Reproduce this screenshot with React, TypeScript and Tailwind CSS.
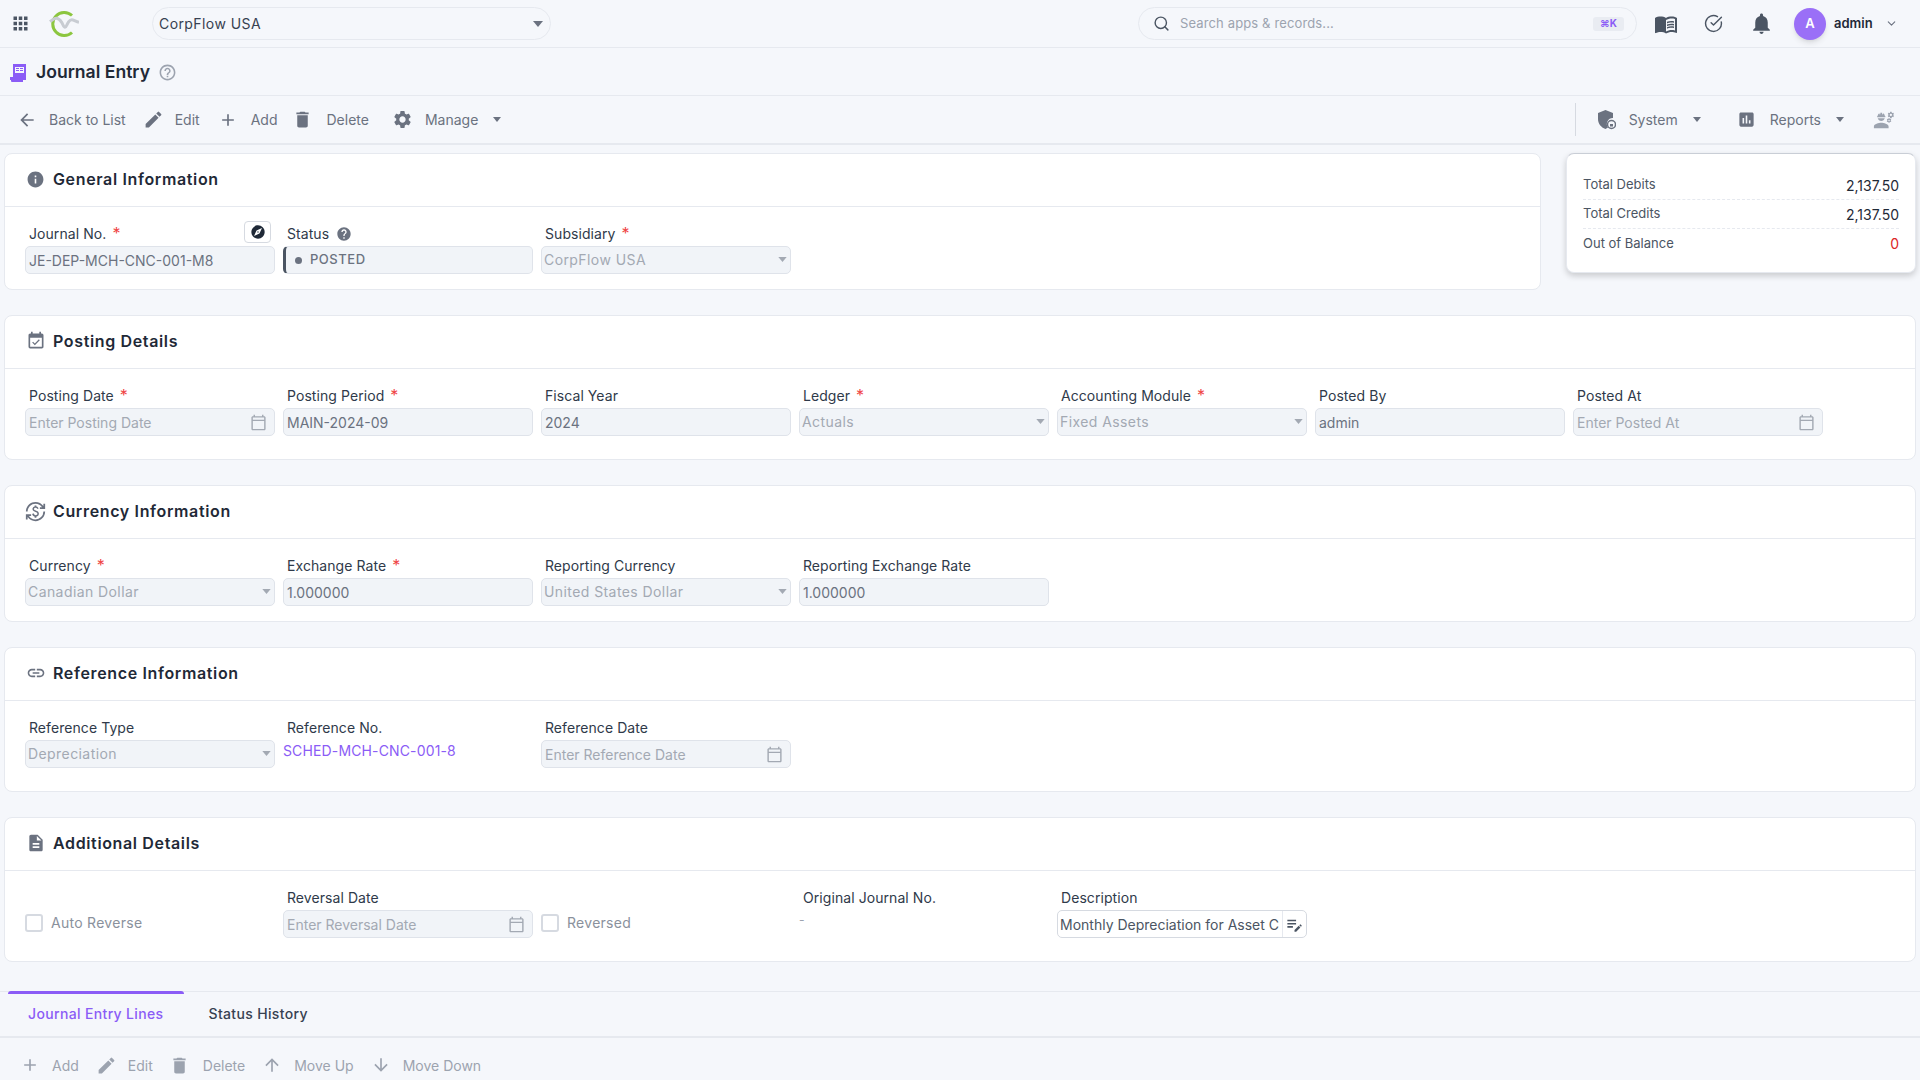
import { ReactNode } from "react";
import { ChevronDown, CircleCheckBig, Search } from "lucide-react";
import {
  MdAdd,
  MdApps,
  MdArrowBack,
  MdArrowDownward,
  MdArrowUpward,
  MdAssessment,
  MdCurrencyExchange,
  MdDelete,
  MdDescription,
  MdEdit,
  MdEngineering,
  MdEventAvailable,
  MdExplore,
  MdHelp,
  MdHelpOutline,
  MdInfo,
  MdLink,
  MdMenuBook,
  MdNotifications,
  MdOutlineCalendarToday,
  MdOutlineEditNote,
  MdSettings,
} from "react-icons/md";

function Caret({ className }: { className: string }) {
  return (
    <svg viewBox="0 0 10 6" className={className} fill="currentColor">
      <path d="M0 0h10L5 6z" />
    </svg>
  );
}

function Logo() {
  return (
    <svg viewBox="0 0 30 26" className="w-[30px] h-[26px]" fill="none">
      <path d="M23 4.500A11.500 11.500 0 1 0 23 21.500" stroke="#8cc63f" strokeWidth="3" />
      <path d="M1 10.700C3 9 5.500 7 7.700 7.300S11.500 9.500 12.700 11.300S14.500 16.300 16 16.300S18 13 19.300 11.300S21 8.700 22.700 8.700S27 10.500 30 11.300" stroke="#c8ccd2" strokeWidth="3" />
    </svg>
  );
}

function JournalIcon() {
  return (
    <svg viewBox="0 0 17 18" className="w-[17px] h-[18px]" fill="#8b5cf6">
      <path d="M3 0h13v16H0v-3h3zM5 3v6h9V3z" />
      <path d="M6 4h3v1H6zm4 0h3v1h-3zM6 6h3v1H6zm4 0h3v1h-3z" />
      <path d="M1 15h12v3H2a1 1 0 0 1-1-1z" />
    </svg>
  );
}

function ShieldIcon() {
  return (
    <svg viewBox="0 0 18 20" className="w-[18px] h-[20px]" fill="#6b7280">
      <path d="M7.500 0 15 3v5a6 6 0 0 0-5 9.500L7.500 19C3 17.500 0 13.500 0 9V3z" />
      <circle cx="13.500" cy="14.500" r="4" fill="none" stroke="#6b7280" strokeWidth="1.500" />
      <rect x="12" y="14" width="3" height="2.500" />
    </svg>
  );
}

function ToolButton({ icon, label, className, caret }: { icon: ReactNode; label: string; className: string; caret?: boolean }) {
  return (
    <button className={`flex items-center ${className}`}>
      {icon}
      <span>{label}</span>
      {caret && <Caret className="w-[8px] h-[5px] ml-[15px]" />}
    </button>
  );
}

function Card({ icon, title, className, children }: { icon: ReactNode; title: string; className: string; children: ReactNode }) {
  return (
    <section className={`bg-white border border-[#e6e9ef] rounded-lg ${className}`}>
      <div className="h-[53px] pb-[2px] flex items-center border-b border-[#e6e9ef] pl-[15px]">
        <span className="w-[31px] text-[#6b7280] flex justify-center mr-[2px]">{icon}</span>
        <h2 className="text-[16px] font-semibold tracking-[0.04em] text-[#1f2937]">{title}</h2>
      </div>
      {children}
    </section>
  );
}

function Field({ label, required, help, action, children }: { label: string; required?: boolean; help?: boolean; action?: ReactNode; children: ReactNode }) {
  return (
    <div className="w-[250px]">
      <div className="h-[24px] pl-[4px] flex items-center text-[14px] leading-none tracking-[0.005em] text-[#2f3a4a] relative">
        <span>{label}</span>
        {required && <span className="ml-[6px] text-[16px] text-[#ef4444] -mt-[2px]">*</span>}
        {help && <MdHelp className="ml-[7px] w-[16px] h-[16px] text-[#6b7280]" />}
        {action}
      </div>
      {children}
    </div>
  );
}

function TextBox({ value, placeholder, calendar }: { value?: string; placeholder?: string; calendar?: boolean }) {
  return (
    <div className="h-[28px] bg-[#f1f4f8] border border-[#dfe3ea] rounded-[5px] pl-[3px] pr-[7px] flex items-center justify-between text-[14px]">
      {value ? <span className="text-[#6b7280]">{value}</span> : <span className="text-[#a3a9b3]">{placeholder}</span>}
      {calendar && <MdOutlineCalendarToday className="w-[17px] h-[17px] text-[#a3a9b3]" />}
    </div>
  );
}

function SelectBox({ value }: { value: string }) {
  return (
    <div className="h-[28px] bg-[#f1f4f8] border border-[#dfe3ea] rounded-[5px] pl-[2px] pr-[3px] pb-[1px] flex items-center justify-between text-[14px] tracking-[0.03em] text-[#a3a9b3]">
      <span>{value}</span>
      <Caret className="w-[9px] h-[5px] text-[#a3a9b3]" />
    </div>
  );
}

function Check({ label, className }: { label: string; className: string }) {
  return (
    <label className={`w-[250px] flex items-center gap-2 text-[14px] tracking-[0.02em] text-[#8a919c] ${className}`}>
      <span className="w-[18px] h-[18px] rounded-[3px] border-2 border-[#d6dae1] bg-white" />
      {label}
    </label>
  );
}

function SummaryRow({ label, value, red, line }: { label: string; value: string; red?: boolean; line?: boolean }) {
  return (
    <div className={`h-[29px] flex items-center justify-between text-[13px] ${line ? "border-b border-dashed border-[#e6e9ef]" : ""}`}>
      <span className="text-[#4b5563]">{label}</span>
      <span className={`text-[14px] ${red ? "text-[#dc2626]" : "text-[#1f2937]"}`}>{value}</span>
    </div>
  );
}

export default function App() {
  return (
    <div className="h-screen overflow-hidden bg-[#f5f7fb] font-['Inter',sans-serif]">
      <header className="h-[48px] border-b border-[#e6e9ef] flex items-center">
        <MdApps className="ml-[10px] w-[21px] h-[21px] text-[#4b5563]" />
        <span className="ml-[18px] flex">
          <Logo />
        </span>
        <div className="ml-[73px] w-[399px] h-[33px] rounded-full border border-[#e6e9ef] flex items-center justify-between pl-[6px] pr-[7px] text-[14px] tracking-[0.03em] text-[#374151]">
          <span>CorpFlow USA</span>
          <Caret className="w-[10px] h-[6px] text-[#6b7280]" />
        </div>
        <div className="ml-[587px] w-[499px] h-[33px] rounded-full border border-[#e6e9ef] flex items-center pl-[14px] pr-[12px] text-[13px] tracking-[0.01em] text-[#9ca3af]">
          <Search className="w-[17px] h-[17px] text-[#4b5563] mr-[10px]" strokeWidth={2} />
          <span className="flex-1">Search apps &amp; records...</span>
          <span className="w-[31px] h-[14px] rounded-[3px] bg-[#e9ecf2] flex items-center justify-center text-[10px] font-bold text-[#8b5cf6]">⌘K</span>
        </div>
        <MdMenuBook className="ml-[17px] w-[24px] h-[24px] text-[#4b5563]" />
        <CircleCheckBig className="ml-[26px] w-[19px] h-[19px] text-[#4b5563]" strokeWidth={1.8} />
        <MdNotifications className="ml-[26px] w-[25px] h-[25px] text-[#4b5563]" />
        <span className="ml-[20px] w-[32px] h-[32px] rounded-full bg-[#9a6ff7] shadow-md text-white text-[13px] font-semibold flex items-center justify-center">A</span>
        <span className="ml-[8px] text-[13px] font-semibold text-[#1f2937]">admin</span>
        <ChevronDown className="ml-[12px] w-[13px] h-[13px] text-[#6b7280]" />
      </header>

      <div className="h-[48px] pt-[2px] border-b border-[#e6e9ef] flex items-center pl-[10px]">
        <JournalIcon />
        <h1 className="ml-[9px] text-[17.600px] font-semibold text-[#1f2937]">Journal Entry</h1>
        <MdHelpOutline className="ml-[8px] w-[19px] h-[19px] text-[#9ca3af]" />
      </div>

      <div className="h-[49px] border-b-2 border-[#e6e9ef] flex items-center text-[14px] text-[#6b7280]">
        <ToolButton className="ml-[17px]" icon={<MdArrowBack className="w-[20px] h-[20px] mr-[12px]" />} label="Back to List" />
        <ToolButton className="ml-[17px]" icon={<MdEdit className="w-[21px] h-[21px] mr-[11px]" />} label="Edit" />
        <ToolButton className="ml-[18px]" icon={<MdAdd className="w-[20px] h-[20px] mr-[13px]" />} label="Add" />
        <ToolButton className="ml-[15px]" icon={<MdDelete className="w-[21px] h-[21px] mr-[13px]" />} label="Delete" />
        <ToolButton className="ml-[23px]" caret icon={<MdSettings className="w-[21px] h-[21px] mr-[12px]" />} label="Manage" />
        <div className="ml-auto h-[33px] border-l border-[#d6dae1]" />
        <ToolButton className="ml-[22px]" caret icon={<span className="mr-[13px] flex"><ShieldIcon /></span>} label="System" />
        <ToolButton className="ml-[36px]" caret icon={<MdAssessment className="w-[19px] h-[19px] mr-[14px]" />} label="Reports" />
        <MdEngineering className="ml-[29px] mr-[25px] w-[22px] h-[22px] text-[#9ca3af]" />
      </div>

      <main className="px-[4px] pt-[8px] flex flex-col gap-[25px]">
        <div className="flex gap-[25px] items-start">
          <Card className="flex-1 h-[137px]" icon={<MdInfo className="w-[19px] h-[19px]" />} title="General Information">
            <div className="pl-[20px] pt-[15px] flex gap-[8px]">
              <Field
                label="Journal No."
                required
                action={
                  <span className="absolute right-[4px] -top-[1px] w-[27px] h-[22px] rounded-[4px] border border-[#d6dae1] flex items-center justify-center bg-white">
                    <MdExplore className="w-[16px] h-[16px] text-[#1f2937]" />
                  </span>
                }
              >
                <TextBox value="JE-DEP-MCH-CNC-001-M8" />
              </Field>
              <Field label="Status" help>
                <div className="h-[28px] bg-[#f1f4f8] border border-[#dfe3ea] border-l-[3px] border-l-[#4b5563] rounded-[5px] pl-[9px] flex items-center gap-[8px] text-[13px] font-medium tracking-[0.04em] text-[#6b7280]">
                  <span className="w-[7px] h-[7px] rounded-full bg-[#6b7280]" />
                  POSTED
                </div>
              </Field>
              <Field label="Subsidiary" required>
                <SelectBox value="CorpFlow USA" />
              </Field>
            </div>
          </Card>
          <aside className="w-[350px] h-[120px] bg-white rounded-lg border border-[#e6e9ef] border-t-[#c9ced6] shadow-[0_3px_6px_rgba(0,0,0,0.18)] px-[16px] pt-[17px]">
            <SummaryRow label="Total Debits" value="2,137.50" line />
            <SummaryRow label="Total Credits" value="2,137.50" line />
            <SummaryRow label="Out of Balance" value="0" red />
          </aside>
        </div>

        <Card className="h-[145px]" icon={<MdEventAvailable className="w-[20px] h-[20px]" />} title="Posting Details">
          <div className="pl-[20px] pt-[15px] flex gap-[8px]">
            <Field label="Posting Date" required><TextBox placeholder="Enter Posting Date" calendar /></Field>
            <Field label="Posting Period" required><TextBox value="MAIN-2024-09" /></Field>
            <Field label="Fiscal Year"><TextBox value="2024" /></Field>
            <Field label="Ledger" required><SelectBox value="Actuals" /></Field>
            <Field label="Accounting Module" required><SelectBox value="Fixed Assets" /></Field>
            <Field label="Posted By"><TextBox value="admin" /></Field>
            <Field label="Posted At"><TextBox placeholder="Enter Posted At" calendar /></Field>
          </div>
        </Card>

        <Card className="h-[137px]" icon={<MdCurrencyExchange className="w-[21px] h-[21px]" />} title="Currency Information">
          <div className="pl-[20px] pt-[15px] flex gap-[8px]">
            <Field label="Currency" required><SelectBox value="Canadian Dollar" /></Field>
            <Field label="Exchange Rate" required><TextBox value="1.000000" /></Field>
            <Field label="Reporting Currency"><SelectBox value="United States Dollar" /></Field>
            <Field label="Reporting Exchange Rate"><TextBox value="1.000000" /></Field>
          </div>
        </Card>

        <Card className="h-[145px]" icon={<MdLink className="w-[20px] h-[20px]" />} title="Reference Information">
          <div className="pl-[20px] pt-[15px] flex gap-[8px]">
            <Field label="Reference Type"><SelectBox value="Depreciation" /></Field>
            <Field label="Reference No.">
              <a className="block text-[14px] tracking-[0.01em] leading-[22px] text-[#8b5cf6]">SCHED-MCH-CNC-001-8</a>
            </Field>
            <Field label="Reference Date"><TextBox placeholder="Enter Reference Date" calendar /></Field>
          </div>
        </Card>

        <Card className="h-[145px]" icon={<MdDescription className="w-[20px] h-[20px]" />} title="Additional Details">
          <div className="pl-[20px] pt-[15px] flex gap-[8px]">
            <Check label="Auto Reverse" className="pt-[21px]" />
            <Field label="Reversal Date"><TextBox placeholder="Enter Reversal Date" calendar /></Field>
            <Check label="Reversed" className="pt-[21px]" />
            <Field label="Original Journal No.">
              <span className="block text-[12px] leading-[20px] text-[#9ca3af]">-</span>
            </Field>
            <Field label="Description">
              <div className="h-[28px] bg-white border border-[#d6dae1] rounded-[5px] pl-[2px] flex items-center text-[14px] text-[#4b5563]">
                <span className="flex-1 overflow-hidden whitespace-nowrap">Monthly Depreciation for Asset C</span>
                <span className="w-[24px] h-full border-l border-[#e6e9ef] flex items-center justify-center">
                  <MdOutlineEditNote className="w-[19px] h-[19px] text-[#4b5563]" />
                </span>
              </div>
            </Field>
          </div>
        </Card>
      </main>

      <div className="mt-[29px] border-t border-[#e6e9ef]">
        <div className="h-[46px] pb-[2px] flex items-center text-[14px] font-medium tracking-[0.025em] relative border-b-2 border-[#e6e9ef]">
          <span className="absolute left-[8px] -top-[1px] w-[176px] h-[3px] rounded-t-sm bg-[#8b5cf6]" />
          <span className="ml-[28px] text-[#8b5cf6]">Journal Entry Lines</span>
          <span className="ml-[45px] text-[#374151]">Status History</span>
        </div>
        <div className="h-[54px] flex items-center text-[14px] text-[#9ca3af]">
          <ToolButton className="ml-[20px]" icon={<MdAdd className="w-[20px] h-[20px] mr-[12px]" />} label="Add" />
          <ToolButton className="ml-[17px]" icon={<MdEdit className="w-[21px] h-[21px] mr-[11px]" />} label="Edit" />
          <ToolButton className="ml-[16px]" icon={<MdDelete className="w-[21px] h-[21px] mr-[13px]" />} label="Delete" />
          <ToolButton className="ml-[17px]" icon={<MdArrowUpward className="w-[20px] h-[20px] mr-[12px]" />} label="Move Up" />
          <ToolButton className="ml-[17px]" icon={<MdArrowDownward className="w-[20px] h-[20px] mr-[12px]" />} label="Move Down" />
        </div>
      </div>
    </div>
  );
}
